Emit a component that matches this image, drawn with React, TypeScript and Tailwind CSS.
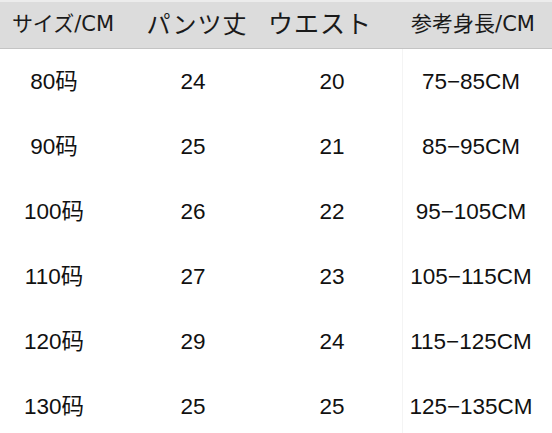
import React from "react"

const rows = [
  ["80码", "24", "20", "75−85CM"],
  ["90码", "25", "21", "85−95CM"],
  ["100码", "26", "22", "95−105CM"],
  ["110码", "27", "23", "105−115CM"],
  ["120码", "29", "24", "115−125CM"],
  ["130码", "25", "25", "125−135CM"],
]

export default function App() {
  return (
    <div className="w-[552px] h-[433px] overflow-hidden bg-white">
      {/* Header */}
      <div className="h-[49px] flex items-center bg-[#dcdcdc] border-t-2 border-t-[#ececec] border-b border-b-[#c4c4c4] text-[#1a1a1a] whitespace-nowrap" style={{ fontFamily: '"DejaVu Sans", "Noto Sans CJK JP", sans-serif' }}>
        <div className="w-[126px] shrink-0 text-center text-[21px]">サイズ/CM</div>
        <div className="w-[142px] shrink-0 text-center text-[24px] tracking-[1px]">パンツ丈</div>
        <div className="w-[100px] shrink-0 text-center text-[25px] tracking-[1px]">ウエスト</div>
        <div className="w-[210px] shrink-0 text-center text-[21px]">参考身長/CM</div>
      </div>

      {/* Body */}
      <div className="relative" style={{ fontFamily: '"Liberation Sans", "Noto Sans CJK SC", sans-serif' }}>
        <div className="absolute left-[402px] top-0 bottom-0 w-px bg-[#f4f4f4]" />
        {rows.map((row, i) => (
          <div key={i} className="grid grid-cols-[108px_170px_108px_170px] h-[65px] items-center text-[22.5px] text-[#111]">
            {row.map((cell, j) => (
              <div key={j} className="text-center whitespace-nowrap">
                {cell}
              </div>
            ))}
          </div>
        ))}
      </div>
    </div>
  )
}
